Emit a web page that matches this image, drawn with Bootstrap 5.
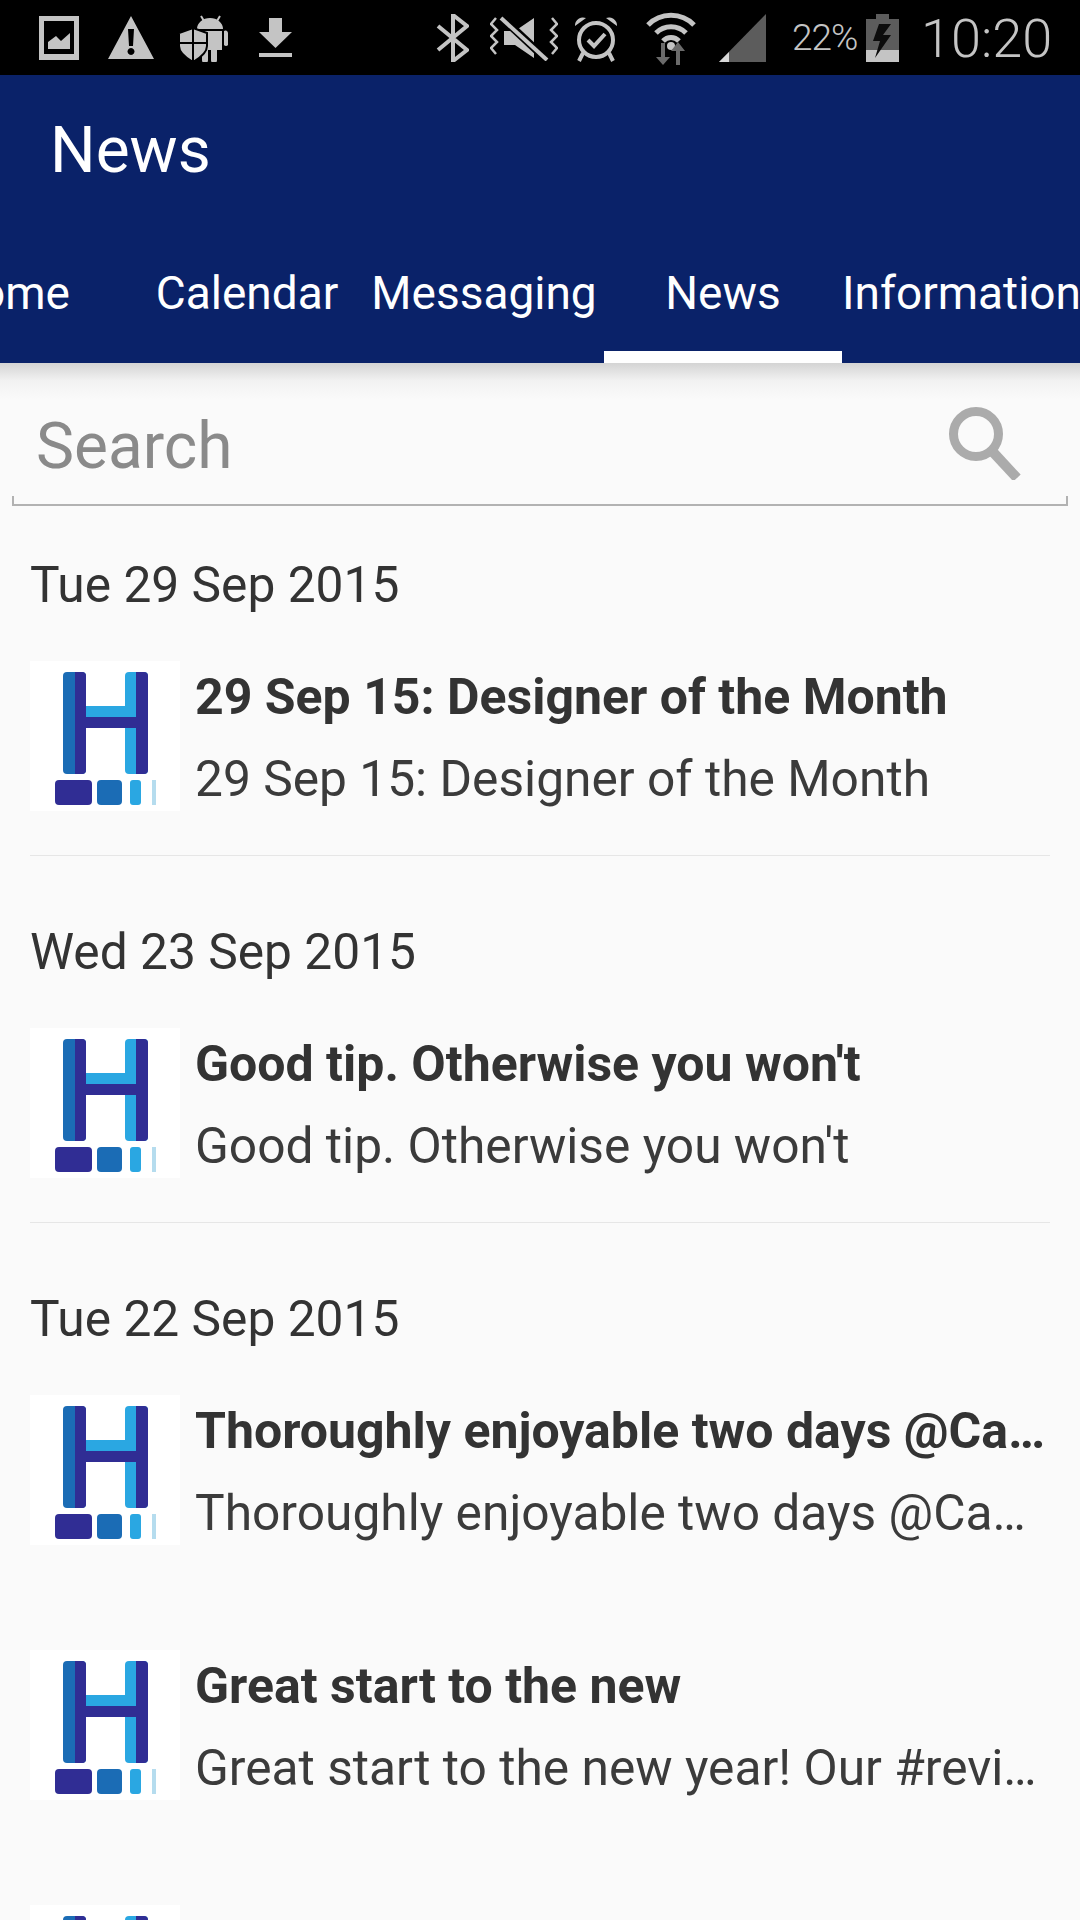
<!DOCTYPE html>
<html lang="en">
<head>
<meta charset="utf-8">
<title>News</title>
<link rel="stylesheet" href="https://cdn.jsdelivr.net/npm/bootstrap@5.3.0/dist/css/bootstrap.min.css">
<style>
html,body{margin:0;height:1920px;overflow:hidden}
body{background:#fafafa;font-family:Roboto,"Noto Sans",sans-serif;color:#333}
.status-strip{height:75px;background:#000;color:#c4c4c4;position:relative}
.status-strip svg{display:block;flex:none;fill:#c4c4c4}
.st-pct{font-weight:300;font-size:37px;line-height:1;letter-spacing:-1px;width:64px;margin-left:26px;margin-top:-1px}
.st-time{font-weight:300;font-size:54px;line-height:1;margin-left:22px;margin-top:2px}
.appbar{background:#0a2269;height:288px;color:#fff}
.appbar-title{height:147px;padding-left:50px;font-size:64px;font-weight:400;line-height:1;padding-top:44px}
.tab-row{height:141px;margin-left:-114px;flex-wrap:nowrap;overflow:hidden}
.tab-item{height:141px;font-size:46px;padding-top:2px;display:flex;align-items:center;justify-content:center;flex:none;color:#fff;text-decoration:none;white-space:nowrap}
.tab-on{box-shadow:inset 0 -12px 0 #fff}
.search-wrap{height:144px;background:linear-gradient(#d4d4d4,#f2f2f2 18px,#fafafa 36px);padding:0 12px}
.search-main{height:133px;padding:0 47px 0 24px}
.search-ph{font-size:64px;color:#8a8a8a;line-height:1;padding-top:34px}
.search-glass{margin-top:26px}
.search-line{height:10px;border:2px solid #b2b2b2;border-top:0}
.day-label{height:154px;padding:56px 30px 0;font-size:49.7px;line-height:44px;color:#333}
.news-row{height:150px;padding:0 30px 0 30px;gap:15px}
.thumb{width:150px;height:150px;flex:none;display:block}
.news-text{min-width:0;flex:1;padding-right:0}
.news-head{font-size:50px;font-weight:700;line-height:56px;margin-top:8px;color:#333}
.news-sub{font-size:49.7px;font-weight:400;line-height:56px;margin-top:26px;color:#3b3b3b}
.news-rule{height:1px;background:#e6e6e6;margin:44px 30px 18px}
.row-gap{height:105px}
</style>
</head>
<body>
<svg width="0" height="0" class="d-block" style="position:absolute">
  <symbol id="logo" viewBox="0 0 150 150">
    <rect width="150" height="150" fill="#fff"/>
    <rect x="33" y="11" width="23" height="102" rx="4" fill="#1b6cb5"/>
    <path d="M45 11h7a4 4 0 0 1 4 4v94a4 4 0 0 1-4 4h-7z" fill="#302d94"/>
    <rect x="95" y="11" width="23" height="102" rx="4" fill="#2aa7e2"/>
    <path d="M106 11h8a4 4 0 0 1 4 4v94a4 4 0 0 1-4 4h-8z" fill="#302d94"/>
    <rect x="56" y="45" width="50" height="11" fill="#2aa7e2"/>
    <rect x="56" y="56" width="50" height="11" fill="#302d94"/>
    <rect x="25" y="119" width="37" height="25" rx="4" fill="#302d94"/>
    <rect x="67" y="119" width="25" height="25" rx="4" fill="#1b6cb5"/>
    <rect x="100" y="119" width="11" height="25" rx="3" fill="#2aa7e2"/>
    <rect x="122" y="119" width="4" height="25" fill="#b5dcee"/>
  </symbol>
</svg>

<div class="status-strip d-flex align-items-center">
  <svg width="40" height="44" viewBox="0 0 40 44" style="margin-left:39px"><path fill-rule="evenodd" d="M0 0h40v44H0zM5 5v33h30V5z"/><path d="M9 33v-7l8-6 5 5 9-8v16z"/></svg>
  <svg width="46" height="43" viewBox="0 0 46 43" style="margin-left:29px"><path fill-rule="evenodd" d="M23 0l23 43H0zM20 13l1 17h4l1-17zM23 32a3.500 3.500 0 1 0 .01 0z"/></svg>
  <svg width="49" height="48" viewBox="0 0 49 48" style="margin-left:25px"><path d="M18 15a13 11 0 0 1 26 0zM22 17h21v19h-5v10a3 3 0 0 1-6 0V36h-3v10a3 3 0 0 1-6 0V33zM45 17a2.500 2.500 0 0 1 4 2v12a2.500 2.500 0 0 1-4 0z"/><path d="M22 2l3 5M41 2l-3 5" stroke="#c4c4c4" stroke-width="2"/><path d="M14 14l14 5v13c0 7-7 12-14 16C7 44 0 39 0 32V19z" stroke="#000" stroke-width="2"/><path d="M14 15v32M1 29h26" stroke="#000" stroke-width="2"/></svg>
  <svg width="33" height="39" viewBox="0 0 33 39" style="margin-left:31px"><path d="M10 0h13v14h10L16.500 30 0 14h10zM0 35h33v4H0z"/></svg>
  <svg width="33" height="48" viewBox="0 0 33 48" style="margin-left:144px"><path d="M2 12l29 24-14 11V1l14 11L2 36" fill="none" stroke="#c4c4c4" stroke-width="4"/></svg>
  <svg width="68" height="46" viewBox="0 0 68 46" style="margin-left:21px"><path d="M6 3L1 9l6 6-6 6 6 6-6 6 5 6M62 3l5 6-6 6 6 6-6 6 6 6-5 6" fill="none" stroke="#c4c4c4" stroke-width="2.500"/><path d="M14 16h11L44 3v40L25 30H14z"/><path d="M12 3l44 41" stroke="#000" stroke-width="8"/><path d="M11 3l46 42" stroke="#c4c4c4" stroke-width="4"/></svg>
  <svg width="44" height="48" viewBox="0 0 44 48" style="margin-left:16px"><path d="M1 12a8 8 0 0 1 11-8zM43 12a8 8 0 0 0-11-8z"/><circle cx="22" cy="26" r="17" fill="none" stroke="#c4c4c4" stroke-width="4"/><path d="M14 26l6 6 11-12" fill="none" stroke="#c4c4c4" stroke-width="4"/><path d="M9 39l-4 8M35 39l4 8" stroke="#c4c4c4" stroke-width="4"/></svg>
  <svg width="50" height="54" viewBox="0 0 50 54" style="margin-left:28px"><path d="M2 14a32 32 0 0 1 46 0M10 22a21 21 0 0 1 30 0M17 30a11 11 0 0 1 16 0" fill="none" stroke="#c4c4c4" stroke-width="5"/><circle cx="25" cy="35" r="4"/><path d="M19 32v14h5l-7 8-7-8h5V32z" fill="#6b6b6b"/><path d="M34 54V40h5l-7-9-7 9h5v14z" fill="#6b6b6b"/></svg>
  <svg width="47" height="48" viewBox="0 0 47 48" style="margin-left:23px"><path d="M47 0v48H0z" fill="#5c5c5c"/><path d="M10 38v10H0z" fill="#d8d8d8"/></svg>
  <div class="st-pct">22%</div>
  <svg width="33" height="48" viewBox="0 0 33 48" style="margin-left:10px;margin-right:0"><path d="M10 0h13v5h10v33H0V5h10z" fill="#5c5c5c"/><path d="M0 36h33v12H0z"/><path d="M25 10H13L7 27h7l-5 17 16-23h-8z" fill="#0c0c0c"/></svg>
  <div class="st-time">10:20</div>
</div>

<header class="appbar">
  <div class="appbar-title">News</div>
  <nav class="nav tab-row">
    <a class="tab-item" href="#" style="width:244px">Home</a>
    <a class="tab-item" href="#" style="width:234px">Calendar</a>
    <a class="tab-item" href="#" style="width:240px">Messaging</a>
    <a class="tab-item tab-on" href="#" style="width:238px">News</a>
    <a class="tab-item" href="#" style="width:238px;justify-content:flex-start">Information</a>
  </nav>
</header>

<div class="search-wrap">
  <div class="search-main d-flex justify-content-between align-items-center">
    <div class="search-ph">Search</div>
    <svg width="74" height="74" viewBox="0 0 74 74" class="search-glass flex-none"><circle cx="29" cy="28" r="22.500" fill="none" stroke="#ababab" stroke-width="9"/><path d="M45 45l25 27" stroke="#ababab" stroke-width="10"/></svg>
  </div>
  <div class="search-line"></div>
</div>

<main>
  <div class="day-label">Tue 29 Sep 2015</div>
  <div class="news-row d-flex">
    <svg class="thumb"><use href="#logo"/></svg>
    <div class="news-text">
      <div class="news-head text-truncate">29 Sep 15: Designer of the Month</div>
      <div class="news-sub text-truncate">29 Sep 15: Designer of the Month</div>
    </div>
  </div>
  <div class="news-rule"></div>

  <div class="day-label">Wed 23 Sep 2015</div>
  <div class="news-row d-flex">
    <svg class="thumb"><use href="#logo"/></svg>
    <div class="news-text">
      <div class="news-head text-truncate">Good tip. Otherwise you won't</div>
      <div class="news-sub text-truncate">Good tip. Otherwise you won't</div>
    </div>
  </div>
  <div class="news-rule"></div>

  <div class="day-label">Tue 22 Sep 2015</div>
  <div class="news-row d-flex">
    <svg class="thumb"><use href="#logo"/></svg>
    <div class="news-text">
      <div class="news-head text-truncate">Thoroughly enjoyable two days @Cambridge</div>
      <div class="news-sub text-truncate">Thoroughly enjoyable two days @Cambridge</div>
    </div>
  </div>
  <div class="row-gap"></div>
  <div class="news-row d-flex">
    <svg class="thumb"><use href="#logo"/></svg>
    <div class="news-text">
      <div class="news-head text-truncate">Great start to the new</div>
      <div class="news-sub text-truncate">Great start to the new year! Our #review of the year</div>
    </div>
  </div>
  <div class="row-gap"></div>
  <div class="news-row d-flex">
    <svg class="thumb"><use href="#logo"/></svg>
  </div>
</main>
<script src="https://cdn.jsdelivr.net/npm/bootstrap@5.3.0/dist/js/bootstrap.bundle.min.js"></script>
</body>
</html>
